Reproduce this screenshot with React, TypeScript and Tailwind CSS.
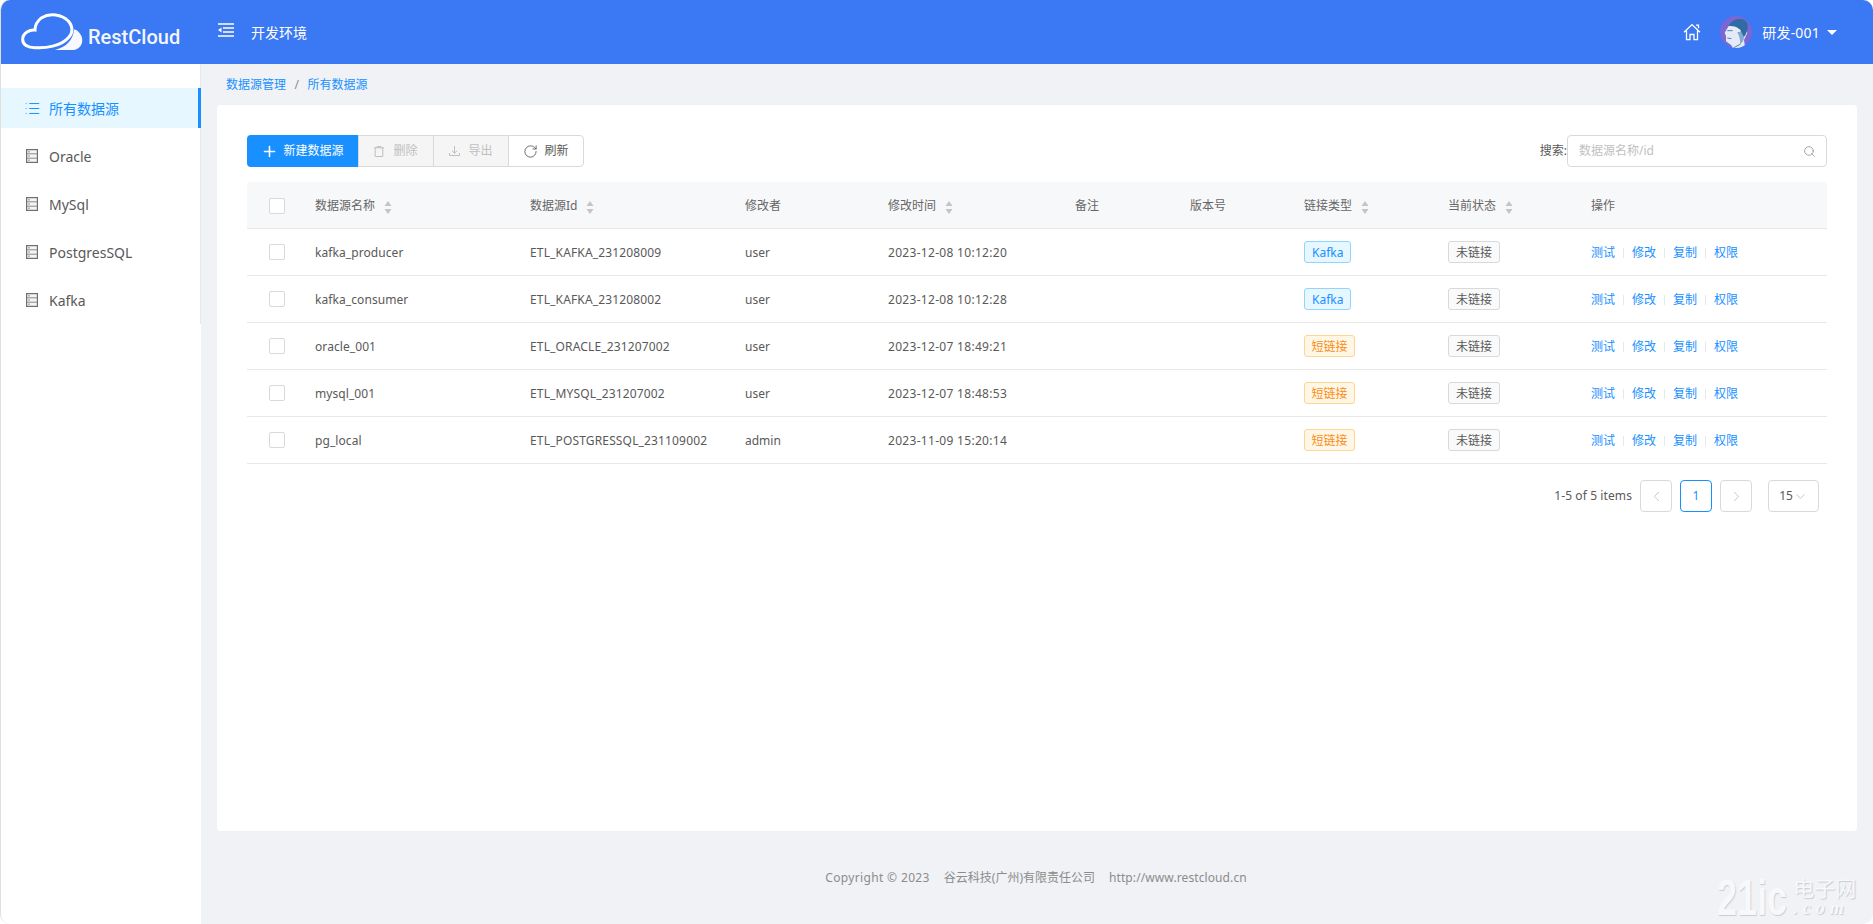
import { ChevronLeft, ChevronRight, ChevronDown, List, Plus, RotateCw, Search } from "lucide-react"

const FONT = "font-['Noto_Sans','Noto_Sans_CJK_SC',sans-serif]"
const GRID = "grid grid-cols-[68px_215px_215px_143px_187px_115px_114px_144px_143px_1fr] items-center"

const rows = [
  { name: "kafka_producer", id: "ETL_KAFKA_231208009", user: "user", time: "2023-12-08 10:12:20", type: "Kafka" },
  { name: "kafka_consumer", id: "ETL_KAFKA_231208002", user: "user", time: "2023-12-08 10:12:28", type: "Kafka" },
  { name: "oracle_001", id: "ETL_ORACLE_231207002", user: "user", time: "2023-12-07 18:49:21", type: "短链接" },
  { name: "mysql_001", id: "ETL_MYSQL_231207002", user: "user", time: "2023-12-07 18:48:53", type: "短链接" },
  { name: "pg_local", id: "ETL_POSTGRESSQL_231109002", user: "admin", time: "2023-11-09 15:20:14", type: "短链接" },
]

function ServerIcon() {
  return (
    <svg width="12" height="14" viewBox="0 0 12 14" className="shrink-0">
      <rect x="0.6" y="0.6" width="10.8" height="12.8" fill="#f4f4f4" stroke="#6e6e6e" strokeWidth="1.2" />
      <path d="M1 4.8h10M1 9.2h10" stroke="#8a8a8a" strokeWidth="1" fill="none" />
      <path d="M3 2.2v1.2M3 6.4v1.2M3 10.6v1.2" stroke="#555" strokeWidth="1" fill="none" />
    </svg>
  )
}

function Sorter() {
  return (
    <svg width="8" height="13" viewBox="0 0 8 13" className="shrink-0 mt-[2px]">
      <path d="M4 0 7.5 5H0.5Z" fill="#c4c4c4" />
      <path d="M4 13 7.5 8H0.5Z" fill="#c4c4c4" />
    </svg>
  )
}

function Checkbox() {
  return <span className="block w-4 h-4 ml-[22px] border border-[#d9d9d9] rounded-[2px] bg-white" />
}

function HeadCell({ label, sort }: { label: string; sort?: boolean }) {
  return (
    <div className="flex items-center gap-[9px] pt-[2px] text-[12px] text-[#666]">
      <span>{label}</span>
      {sort && <Sorter />}
    </div>
  )
}

function Tag({ type }: { type: string }) {
  if (type === "Kafka") {
    return <span className="inline-block h-[22px] leading-[21px] px-[7px] border border-[#91d5ff] bg-[#e6f7ff] rounded-[3px] text-[12px] text-[#1890ff]">Kafka</span>
  }
  return <span className="inline-block h-[22px] leading-[21px] px-[6.5px] border border-[#ffd591] bg-[#fff7e6] rounded-[3px] text-[12px] text-[#fa8c16]">{type}</span>
}

function Actions() {
  const items = ["测试", "修改", "复制", "权限"]
  return (
    <div className="flex items-center text-[12px] text-[#1890ff]">
      {items.map((a, i) => (
        <span key={a} className="flex items-center">
          {i > 0 && <span className="w-px h-[10px] bg-[#e8e8e8] mx-2" />}
          <span>{a}</span>
        </span>
      ))}
    </div>
  )
}

function CloudLogo() {
  return (
    <svg width="64" height="42" viewBox="30 15 192 126" className="shrink-0">
      <path d="M192 70C210 75 220 95 216 110C212 125 200 132 185 132L135 132C165 125 190 105 192 70Z" fill="#f6f9fe" />
      <path
        d="M75 72C60 70 38 80 38 100C38 118 55 125 75 125C110 128 150 118 170 100C188 85 192 65 175 45C155 25 120 20 95 35C82 45 75 58 75 72Z"
        fill="none"
        stroke="#fff"
        strokeWidth="9"
      />
    </svg>
  )
}

function Avatar() {
  return (
    <svg width="32" height="32" viewBox="0 0 96 96" className="shrink-0">
      <defs>
        <clipPath id="avatar-clip">
          <circle cx="48" cy="48" r="48" />
        </clipPath>
      </defs>
      <g clipPath="url(#avatar-clip)">
        <rect width="96" height="96" fill="#7b66d4" />
        <path d="M26 30L14 50L18 60L18 76L34 88L40 100H76L72 72L82 50L74 22Z" fill="#e3ecf6" />
        <path d="M26 30C34 12 52 6 68 10C82 14 88 30 80 48C78 56 74 62 68 66L62 54L62 42L50 34C42 30 34 30 26 30Z" fill="#2f6ca6" />
        <path d="M52 48C58 62 62 74 60 84C66 82 72 74 72 64L64 48Z" fill="#86aacf" />
        <path d="M22 44H38M22 66L34 68M40 96L62 84" stroke="#4d7fb0" strokeWidth="3" fill="none" />
      </g>
    </svg>
  )
}

export default function App() {
  return (
    <div className={`${FONT} w-[1873px] h-[924px] bg-white`}>
      <div className="h-full overflow-hidden rounded-[10px] border-l border-[#e0e0e0] bg-[#f0f2f5] flex flex-col relative">
        {/* header */}
        <header className="h-16 shrink-0 bg-[#3b78f3] flex items-center text-white">
          <div className="w-[217px] flex items-center pl-[19px] gap-[4px]">
            <CloudLogo />
            <span className="font-['Roboto',sans-serif] font-medium text-[20px] mt-[10px] text-[#f2f6fe]">RestCloud</span>
          </div>
          <svg width="16" height="14" viewBox="0 0 16 14" className="-mt-1">
            <path d="M0 1h16M5 5h11M5 9h11M0 13h16" stroke="#fff" strokeWidth="1.3" fill="none" />
            <path d="M0 7l3.5-2.5v5Z" fill="#fff" />
          </svg>
          <span className="ml-[17px] text-[14px]">开发环境</span>
          <div className="ml-auto flex items-center pr-[36px]">
            <svg width="18" height="18" viewBox="0 0 18 18" className="mr-[19px]">
              <path d="M1 9.2 9 1.6 17 9.2M3.5 7.4V16.6H7V11.5H11V16.6H14.5V7.4M13 2.2h2.5v3" fill="none" stroke="#fff" strokeWidth="1.3" />
            </svg>
            <Avatar />
            <span className="ml-[10px] text-[14px] tracking-[0.2px]">研发-001</span>
            <span className="ml-[7px] w-0 h-0 border-x-[5px] border-x-transparent border-t-[5px] border-t-white" />
          </div>
        </header>

        <div className="flex flex-1 min-h-0">
          {/* sidebar */}
          <aside className="w-[200px] shrink-0 bg-white text-[14px]">
            <div className="h-[260px] border-r border-[#e8e8e8] pt-6">
              <div className="h-10 -mr-px flex items-center pl-[23px] bg-[#e6f7ff] border-r-[3px] border-[#1890ff] text-[#1890ff]">
                <List size={17} strokeWidth={1.4} className="mr-2" />
                所有数据源
              </div>
              {["Oracle", "MySql", "PostgresSQL", "Kafka"].map((label) => (
                <div key={label} className="h-10 mt-2 flex items-center pl-[25px] gap-[11px] text-[#595959]">
                  <ServerIcon />
                  {label}
                </div>
              ))}
            </div>
          </aside>

          {/* main */}
          <main className="flex-1 min-w-0 flex flex-col pl-4 pr-4">
            <div className="h-[41px] shrink-0 flex items-center pl-[9px] text-[12px] text-[#1890ff]">
              <span>数据源管理</span>
              <span className="mx-[8.5px] text-[#8c8c8c]">/</span>
              <span>所有数据源</span>
            </div>
            <section className="h-[726px] shrink-0 bg-white rounded-[4px] pt-[30px] pl-[30px] pr-[30px]">
              <div className="flex items-center h-8 text-[12px]">
                <button className="h-8 w-[111px] flex items-center justify-center gap-[5px] rounded-l-[4px] bg-[#1890ff] text-white">
                  <Plus size={17} strokeWidth={2.2} />
                  新建数据源
                </button>
                <button className="h-8 w-[76px] flex items-center justify-center gap-[9px] bg-[#f5f5f5] border border-[#d9d9d9] text-[#bfbfbf]">
                  <svg width="10" height="11" viewBox="0 0 10 11" className="shrink-0">
                    <path d="M0 1.8h10M3 1.8V.5h4v1.3M1.2 1.8v8.7h7.6V1.8" fill="none" stroke="#bfbfbf" strokeWidth="1" />
                  </svg>
                  删除
                </button>
                <button className="h-8 w-[76px] -ml-px flex items-center justify-center gap-2 bg-[#f5f5f5] border border-[#d9d9d9] text-[#bfbfbf]">
                  <svg width="11" height="10" viewBox="0 0 11 10" className="shrink-0">
                    <path d="M5.5 0v7M3 4.8l2.5 2.4L8 4.8M.5 7v2.5h10V7" fill="none" stroke="#bfbfbf" strokeWidth="1" />
                  </svg>
                  导出
                </button>
                <button className="h-8 w-[76px] -ml-px flex items-center justify-center gap-[6px] bg-white border border-[#d9d9d9] rounded-r-[4px] text-[#595959]">
                  <RotateCw size={15} strokeWidth={1.4} />
                  刷新
                </button>
                <div className="ml-auto flex items-center">
                  <span className="text-[#595959]">搜索:</span>
                  <div className="w-[260px] h-8 flex items-center pl-[11px] pr-[10px] border border-[#d9d9d9] rounded-[4px] text-[#bfbfbf]">
                    <span>数据源名称/id</span>
                    <Search size={13} strokeWidth={1.4} className="ml-auto text-[#8c8c8c]" />
                  </div>
                </div>
              </div>

              <div className={`${GRID} mt-[15px] h-[47px] bg-[#f7f8fa] border-b border-[#e8e8e8] rounded-t-[3px]`}>
                <span className="pt-[2px]"><Checkbox /></span>
                <HeadCell label="数据源名称" sort />
                <HeadCell label="数据源Id" sort />
                <HeadCell label="修改者" />
                <HeadCell label="修改时间" sort />
                <HeadCell label="备注" />
                <HeadCell label="版本号" />
                <HeadCell label="链接类型" sort />
                <HeadCell label="当前状态" sort />
                <HeadCell label="操作" />
              </div>

              {rows.map((r) => (
                <div key={r.name} className={`${GRID} h-[47px] border-b border-[#e8e8e8] text-[12px] text-[#595959]`}>
                  <Checkbox />
                  <span className="pt-[2px] tracking-[0.08px]">{r.name}</span>
                  <span className="pt-[2px] tracking-[0.15px]">{r.id}</span>
                  <span className="pt-[2px]">{r.user}</span>
                  <span className="pt-[2px] tracking-[0.3px]">{r.time}</span>
                  <span />
                  <span />
                  <span><Tag type={r.type} /></span>
                  <span>
                    <span className="inline-block h-[22px] leading-[21px] px-[7px] border border-[#d9d9d9] bg-[#fafafa] rounded-[3px] text-[#595959]">未链接</span>
                  </span>
                  <div className="pt-[2px]"><Actions /></div>
                </div>
              ))}

              <div className="flex items-center justify-end mt-4 pr-2 text-[12px] text-[#595959]">
                <span className="tracking-[0.1px]">1-5 of 5 items</span>
                <span className="ml-2 w-8 h-8 flex items-center justify-center border border-[#d9d9d9] rounded-[4px] text-[#bfbfbf]">
                  <ChevronLeft size={17} strokeWidth={1.2} />
                </span>
                <span className="ml-2 w-8 h-8 flex items-center justify-center border border-[#1890ff] rounded-[4px] text-[#1890ff]">1</span>
                <span className="ml-2 w-8 h-8 flex items-center justify-center border border-[#d9d9d9] rounded-[4px] text-[#bfbfbf]">
                  <ChevronRight size={17} strokeWidth={1.2} />
                </span>
                <span className="ml-4 w-[51px] h-8 flex items-center justify-center border border-[#d9d9d9] rounded-[4px]">
                  15
                  <ChevronDown size={15} strokeWidth={1} className="text-[#a6a6a6]" />
                </span>
              </div>
            </section>
            <footer className="h-[97px] flex items-center justify-center gap-[14px] text-[12px] text-[#8c8c8c] pr-[2px]">
              <span className="tracking-[0.35px]">Copyright © 2023</span>
              <span>谷云科技(广州)有限责任公司</span>
              <span className="tracking-[0.1px]">http://www.restcloud.cn</span>
            </footer>
          </main>
        </div>

        {/* site watermark over the page corner */}
        <div className="absolute left-[1716px] top-[878px] h-[40px] flex text-[#f7f8fb] [text-shadow:1px_1px_1px_#c9cbd2]">
          <span className="shrink-0 -mr-[21px] font-['Liberation_Sans',sans-serif] font-bold text-[50px] leading-[40px] whitespace-nowrap scale-x-[0.72] origin-left">21ic</span>
          <span className="flex flex-col">
            <span className="text-[21px] leading-[21px]">电子网</span>
            <span className="font-['Liberation_Serif',serif] italic font-bold text-[18px] leading-[19px] tracking-[5px]">.com</span>
          </span>
        </div>
      </div>
    </div>
  )
}
